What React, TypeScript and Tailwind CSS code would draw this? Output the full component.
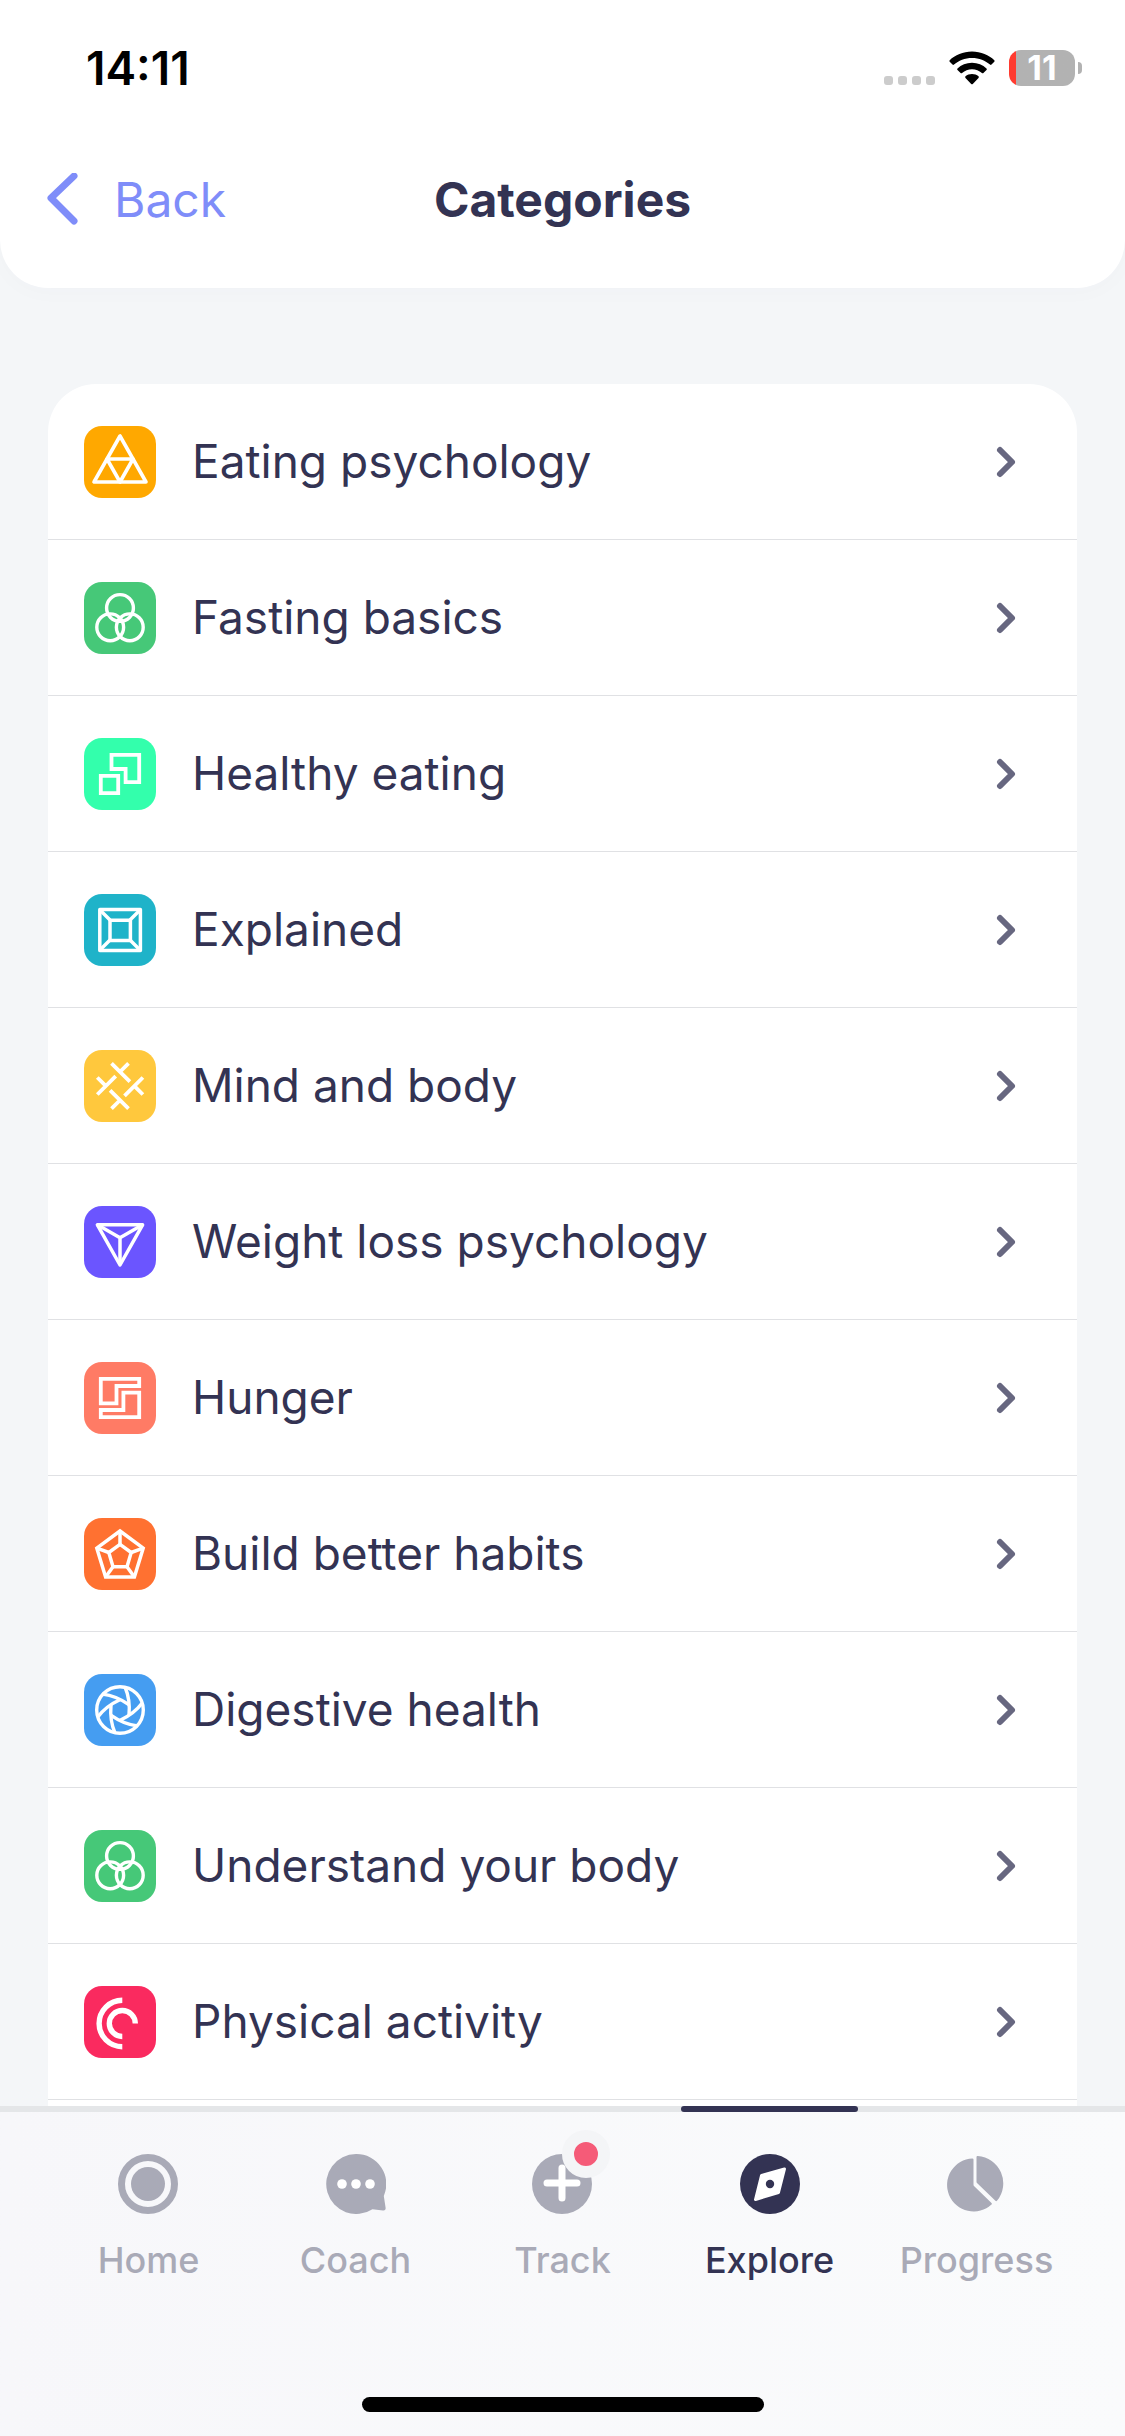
import React, { useState } from "react";

const TriforceIcon = () => (
  <g strokeWidth="3.6" strokeLinejoin="round">
    <path d="M36 10 10 56h52Z" />
    <path d="M23 33h26L36 56Z" />
  </g>
);

const CirclesIcon = () => (
  <g strokeWidth="3.4">
    <circle cx="36" cy="26" r="13.4" />
    <circle cx="26.2" cy="45.3" r="13.4" />
    <circle cx="45.8" cy="45.3" r="13.4" />
  </g>
);

const SquaresIcon = () => (
  <g strokeWidth="3.8">
    <path d="M16.8 37.8h17.4v17.4H16.8Z" />
    <path d="M27.5 16.8h27.7v27.4H41.6V31H27.5Z" />
  </g>
);

const FrameIcon = () => (
  <g strokeWidth="3.5" strokeLinejoin="round">
    <path d="M15.8 15.6h40.6v40.8H15.8Z" />
    <path d="M26 26.2h20.4v20.2H26Z" />
    <path d="m16 16 10 10M56 16 46 26M16 56l10-10M56 56 46 46" />
  </g>
);

const KnotIcon = () => (
  <g strokeWidth="3.8">
    <path d="m27.5 13.3 18.4 18.4M44.5 13.3l-8.2 8.2" />
    <path d="m13.3 44.5 18.4-18.4M13.3 27.5l8.2 8.2" />
    <path d="m26.1 40.3 18.4 18.4M27.5 58.7l8.2-8.2" />
    <path d="M58.9 27.5 40.5 45.9M58.9 44.5l-8.2-8.2" />
  </g>
);

const PrismIcon = () => (
  <g strokeWidth="3.5" strokeLinejoin="round">
    <path d="M13.4 18.8h45.2L36 59Z" />
    <path d="M13.4 18.8 36 31.7l22.6-12.9M36 31.7V59" />
  </g>
);

const MazeIcon = () => (
  <g strokeWidth="3.8">
    <path d="M16.8 16.8h38.4V24H32.5v17.3H16.8Z" />
    <path d="M55.2 55.2V30.7H39.4V48H16.8v7.2Z" />
  </g>
);

const PentagonIcon = () => (
  <g strokeWidth="3.5">
    <path d="m36 13 23.2 17.2L50.4 59H21.6l-8.8-28.8Z" />
    <path d="m36 26.3 11.2 8.2-4.2 14.2H29l-4.2-14.2Z" />
    <path d="M36 13v13.3M59.2 30.2l-12 4.3M50.4 59 43 48.7M21.6 59 29 48.7M12.8 30.2l12 4.3" />
  </g>
);

const ApertureIcon = () => (
  <g strokeWidth="3.4">
    <circle cx="36" cy="36" r="23.3" />
    {[0, 60, 120, 180, 240, 300].map((angle) => (
      <path key={angle} d="M41 13q5.4 12.5 4 28" transform={`rotate(${angle} 36 36)`} />
    ))}
  </g>
);

const RingsIcon = () => (
  <g strokeWidth="5.4">
    <path d="M38.3 14.3a23.2 23.2 0 0 0 0 46.4" />
    <path d="M38.3 50.5a13 13 0 1 1 13-13" />
  </g>
);

const categories = [
  { name: "Eating psychology", color: "bg-[#ffa800]", Icon: TriforceIcon },
  { name: "Fasting basics", color: "bg-[#46c878]", Icon: CirclesIcon },
  { name: "Healthy eating", color: "bg-[#33ffac]", Icon: SquaresIcon },
  { name: "Explained", color: "bg-[#1fb3c9]", Icon: FrameIcon },
  { name: "Mind and body", color: "bg-[#ffc83d]", Icon: KnotIcon },
  { name: "Weight loss psychology", color: "bg-[#6b55ff]", Icon: PrismIcon },
  { name: "Hunger", color: "bg-[#ff7b65]", Icon: MazeIcon },
  { name: "Build better habits", color: "bg-[#ff7131]", Icon: PentagonIcon },
  { name: "Digestive health", color: "bg-[#459df1]", Icon: ApertureIcon },
  { name: "Understand your body", color: "bg-[#46c878]", Icon: CirclesIcon },
  { name: "Physical activity", color: "bg-[#fa2a5f]", Icon: RingsIcon },
];

const HomeIcon = () => (
  <>
    <circle cx="30" cy="30" r="26.5" fill="none" stroke="currentColor" strokeWidth="7" />
    <circle cx="30" cy="30" r="17" />
  </>
);

const CoachIcon = () => (
  <>
    <path d="M30 0a30 30 0 1 0 16.5 55.2l10.5 1.3q3 .3 2.6-2.7L57.8 42A30 30 0 0 0 30 0Z" />
    <g fill="#fff">
      <circle cx="16" cy="30" r="4.8" />
      <circle cx="30" cy="30" r="4.8" />
      <circle cx="44" cy="30" r="4.8" />
    </g>
  </>
);

const TrackIcon = () => (
  <>
    <circle cx="30" cy="30" r="30" />
    <path d="M30 14v30M15 29h30" stroke="#fff" strokeWidth="7" strokeLinecap="round" />
  </>
);

const ExploreIcon = () => (
  <>
    <circle cx="30" cy="30" r="30" />
    <path
      d="M44.5 15 38.5 38.5 15.5 45.5 21.5 21.5Z"
      fill="#fff"
      stroke="#fff"
      strokeWidth="3"
      strokeLinejoin="round"
    />
    <circle cx="30" cy="30" r="4.2" />
  </>
);

const ProgressIcon = () => (
  <>
    <path d="M27.5 5.5q0-1-1.2-1a26.5 26.5 0 1 0 19.2 46q.8-.8 0-1.600L28 32q-.5-.5-.5-1.5Z" />
    <path d="M30.500 3q0-1.200 1.200-1.100A27.500 27.500 0 0 1 51 46.800q-.8.800-1.600 0L31 29q-.5-.5-.5-1.200Z" />
  </>
);

const tabs = [
  { name: "Home", Icon: HomeIcon },
  { name: "Coach", Icon: CoachIcon },
  { name: "Track", Icon: TrackIcon, badge: true },
  { name: "Explore", Icon: ExploreIcon },
  { name: "Progress", Icon: ProgressIcon },
];

const StatusBar: React.FC = () => (
  <div className="flex h-34 items-center justify-between pr-[43px] pl-[86px]">
    <span className="text-[46px] font-semibold text-black">14:11</span>
    <div className="flex items-center">
      <div className="mt-6 mr-3.5 flex gap-[5px]">
        <span className="size-[9px] rounded-[3px] bg-[#cccccc]" />
        <span className="size-[9px] rounded-[3px] bg-[#cccccc]" />
        <span className="size-[9px] rounded-[3px] bg-[#cccccc]" />
        <span className="size-[9px] rounded-[3px] bg-[#cccccc]" />
      </div>
      <svg viewBox="0 0 46 34" className="mr-3.5 h-[34px] w-[46px]">
        <path d="M23 .5C32 .5 40 4 45.3 9.2q.7.8 0 1.6L42.5 13.6q-.8.7-1.5 0C36.5 9.6 30 7 23 7S9.5 9.6 5 13.6q-.7.7-1.5 0L.7 10.8q-.7-.8 0-1.6C6 4 14 .5 23 .5Z" />
        <path d="M23 11.8c5.7 0 10.8 2.2 14.5 5.7q.8.8 0 1.6L34.4 22q-.7.7-1.5 0C30.2 19.7 26.8 18.3 23 18.3S15.8 19.7 13.1 22q-.8.7-1.5 0L8.5 19.1q-.8-.8 0-1.6C12.2 14 17.3 11.8 23 11.8Z" />
        <path d="M23 23c2.5 0 4.8.9 6.5 2.3q.8.8 0 1.6L23.8 33q-.8.7-1.6 0L16.5 26.9q-.8-.8 0-1.6C18.2 23.9 20.5 23 23 23Z" />
      </svg>
      <div className="flex h-9 w-[66px] items-center justify-center rounded-xl bg-linear-to-r from-[#ff3b30] from-[7px] to-[#b2b2b2] to-[7px] text-[34px] leading-none font-bold text-white">
        11
      </div>
      <span className="ml-[3px] h-3 w-1 rounded-r-full bg-[#b2b2b2]" />
    </div>
  </div>
);

const Header: React.FC = () => (
  <header className="rounded-b-[48px] bg-white pb-6 shadow-[0_4px_24px_rgba(50,52,82,0.02)]">
    <StatusBar />
    <div className="grid h-32 grid-cols-3 items-center px-[42px]">
      <button className="flex cursor-pointer items-center gap-9 text-[48px] text-[#7f8df9]">
        <svg viewBox="0 0 36 54" className="h-[54px] w-9" fill="none" stroke="currentColor">
          <path d="M32 3 9 25l23 23" strokeWidth="7" strokeLinecap="round" strokeLinejoin="round" />
        </svg>
        Back
      </button>
      <h1 className="text-center text-[48px] font-bold">Categories</h1>
    </div>
  </header>
);

const CategoryList: React.FC = () => (
  <ul className="flex-1 rounded-t-[48px] bg-white">
    {categories.map(({ name, color, Icon }) => (
      <li key={name} className="border-b border-[#e0e1e4]">
        <a href="#" className="flex h-[155px] items-center pr-[60px] pl-9 text-[46px]">
          <span className={`mr-9 size-[72px] shrink-0 rounded-[18px] ${color}`}>
            <svg viewBox="0 0 72 72" className="size-full" fill="none" stroke="#fff">
              <Icon />
            </svg>
          </span>
          <span className="flex-1">{name}</span>
          <svg viewBox="0 0 22 34" className="h-[34px] w-[22px]" fill="none" stroke="#676780">
            <path d="m5 5 12 12L5 29" strokeWidth="6" strokeLinecap="round" strokeLinejoin="round" />
          </svg>
        </a>
      </li>
    ))}
  </ul>
);

const TabBar: React.FC = () => {
  const [active, setActive] = useState("Explore");

  return (
    <nav className="bg-linear-to-r from-[#f7f7fa] to-[#fafbfc]">
      <div className="border-t-[6px] border-[#e4e6e8]">
        <ul className="-mt-1.5 flex px-[45px]">
          {tabs.map(({ name, Icon, badge }) => (
            <li key={name} className="flex flex-1 flex-col items-center">
              <span
                className={`h-1.5 w-[177px] rounded-full ${
                  active === name ? "bg-[#333353]" : "bg-transparent"
                }`}
              />
              <a
                href="#"
                onClick={() => setActive(name)}
                className={`mt-[42px] flex flex-col items-center gap-6 text-[36px] leading-[44px] font-medium ${
                  active === name ? "text-[#333353]" : "text-[#a9aab7]"
                }`}
              >
                <span className="relative">
                  <svg viewBox="0 0 60 60" className="size-[60px]" fill="currentColor">
                    <Icon />
                  </svg>
                  {badge && (
                    <span className="absolute -top-6 -right-[18px] size-12 rounded-full border-12 border-[#f4f5f7] bg-[#f55b78]" />
                  )}
                </span>
                {name}
              </a>
            </li>
          ))}
        </ul>
      </div>
      <div className="mx-auto mt-[115px] mb-6 h-[15px] w-[402px] rounded-full bg-black" />
    </nav>
  );
};

export default function App() {
  return (
    <div className="flex min-h-screen flex-col bg-[#f4f6f8] font-['Inter','Liberation_Sans',sans-serif] text-[#333353]">
      <Header />
      <main className="flex flex-1 flex-col px-12 pt-24">
        <CategoryList />
      </main>
      <TabBar />
    </div>
  );
}
